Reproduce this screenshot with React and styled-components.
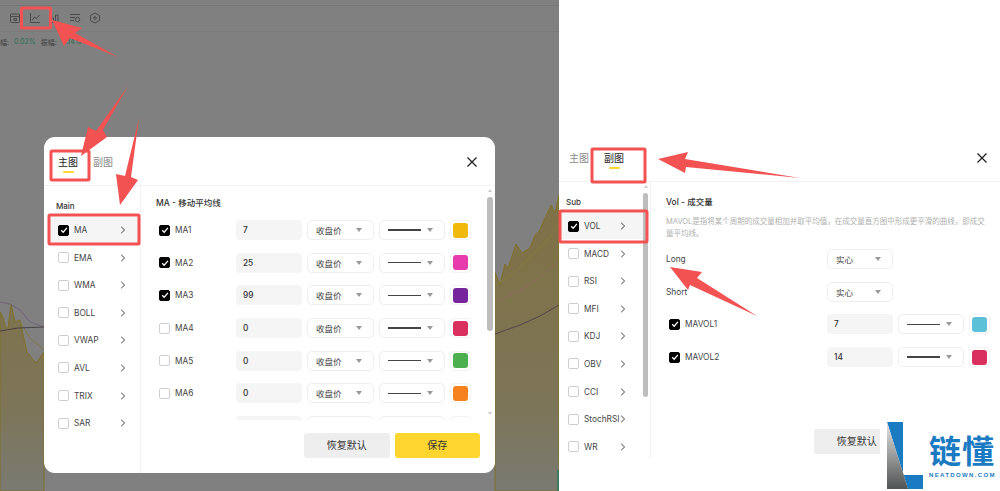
import React from 'react';
import styled, { createGlobalStyle } from 'styled-components';

const Colors = {
    RED: '#f25252',
    YELLOW: '#ffd530',
    BLUE: '#1b7bc2',
    TEXT: '#333333',
    BORDER: '#efefef',
};

const GlobalStyle = createGlobalStyle`
    html, body {
        margin: 0;
        padding: 0;
        background: #ffffff;
    }
    body {
        font-family: "Inter", "Noto Sans CJK SC", sans-serif;
        color: ${Colors.TEXT};
    }
    * {
        box-sizing: border-box;
    }
`;

const Page = styled.div`
    position: relative;
    display: flex;
    width: 1000px;
    height: 491px;
    overflow: hidden;
`;

const ChartSide = styled.div`
    position: relative;
    display: flex;
    flex-direction: column;
    width: 559px;
    height: 491px;
    background: #808080;
`;

const Toolbar = styled.div`
    display: flex;
    align-items: center;
    gap: 8px;
    height: 27px;
    margin-top: 5px;
    padding: 0 0 2px 9px;
    border-top: 1px solid #767676;
`;

const ToolIcon = styled.svg`
    width: 12px;
    height: 12px;
    fill: none;
    stroke: #454545;
    stroke-width: 0.9;
`;

const Stats = styled.div`
    display: flex;
    align-items: center;
    height: 20px;
    border-top: 1px solid #7a7a7a;
    margin-top: -1px;
    font-size: 7px;
    color: #404040;
`;

const StatValue = styled.span`
    color: #2c6e55;
    margin: 0 5px 0 5px;
`;

const ChartArea = styled.div`
    flex: 1;
    min-height: 0;
    & > svg {
        display: block;
        width: 100%;
        height: 100%;
    }
`;

const Modal = styled.div`
    position: absolute;
    left: 44px;
    top: 137px;
    display: flex;
    flex-direction: column;
    width: 451px;
    height: 336px;
    background: #ffffff;
    border-radius: 11px;
    overflow: hidden;
`;

const PlainPanel = styled.div`
    display: flex;
    flex-direction: column;
    width: 441px;
    height: 491px;
    padding-top: 133px;
    background: #ffffff;
`;

const Header = styled.div`
    display: flex;
    flex: none;
    height: 49px;
    padding: 18px ${({ $right }) => $right}px 0 ${({ $left }) => $left}px;
    border-bottom: 1px solid #f2f2f2;
`;

const Tab = styled.div`
    display: flex;
    flex-direction: column;
    align-items: center;
    margin-right: 15px;
    font-size: 10px;
    line-height: 14px;
    color: ${({ $active }) => ($active ? '#222222' : '#8a8a8a')};
    &::after {
        content: '';
        width: 11px;
        height: 2px;
        margin-top: 2px;
        border-radius: 1px;
        background: ${({ $active }) => ($active ? Colors.YELLOW : 'transparent')};
    }
`;

const CloseIcon = styled.svg`
    width: 12px;
    height: 12px;
    margin: 1px 0 0 auto;
    stroke: #1c1c1c;
    stroke-width: 1.2;
`;

const Body = styled.div`
    display: flex;
    flex: ${({ $height }) => ($height ? `0 0 ${$height}px` : 1)};
    min-height: 0;
`;

const Sidebar = styled.div`
    display: flex;
    flex: none;
    width: ${({ $width }) => $width}px;
    border-right: 1px solid #f2f2f2;
    overflow: hidden;
`;

const SideList = styled.div`
    width: ${({ $width }) => $width}px;
    margin-left: ${({ $inset }) => $inset}px;
`;

const SideTitle = styled.div`
    height: 31px;
    padding: 9px 0 0 ${({ $indent }) => $indent}px;
    font-size: 8px;
    line-height: 22px;
    font-weight: 500;
    color: #333333;
`;

const SideItem = styled.div`
    display: flex;
    align-items: center;
    gap: 5px;
    height: 26px;
    margin-bottom: 1.6px;
    padding: 0 ${({ $padRight }) => $padRight}px 0 ${({ $padLeft }) => $padLeft}px;
    background: ${({ $selected }) => ($selected ? '#f5f5f5' : 'transparent')};
    font-size: 8.3px;
    color: #444444;
`;

const SideLabel = styled.span`
    flex: 1;
    min-width: 0;
    white-space: nowrap;
`;

const Chevron = styled.svg`
    flex: none;
    width: 6px;
    height: 8px;
    fill: none;
    stroke: #444444;
    stroke-width: 1;
`;

const Box = styled.span`
    display: flex;
    flex: none;
    align-items: center;
    justify-content: center;
    width: 11px;
    height: 11px;
    border-radius: 2px;
    background: ${({ $checked }) => ($checked ? '#000000' : '#ffffff')};
    border: 1px solid ${({ $checked }) => ($checked ? '#000000' : '#cfcfcf')};
    & > svg {
        width: 8px;
        height: 8px;
        fill: none;
        stroke: #ffffff;
        stroke-width: 1.3;
    }
`;

const Track = styled.div`
    display: flex;
    flex: none;
    flex-direction: column;
    align-items: center;
    width: ${({ $width }) => $width}px;
    height: ${({ $height }) => $height}px;
    margin-right: 2px;
    padding-top: ${({ $top }) => $top}px;
`;

const TrackArrow = styled.span`
    width: 0;
    height: 0;
    border-left: 2.5px solid transparent;
    border-right: 2.5px solid transparent;
    border-bottom: ${({ $down }) => ($down ? 'none' : '3px solid #cccccc')};
    border-top: ${({ $down }) => ($down ? '3px solid #cccccc' : 'none')};
    margin-top: ${({ $down }) => ($down ? 'auto' : '0')};
`;

const Thumb = styled.span`
    width: 100%;
    height: ${({ $height }) => $height}px;
    margin-top: ${({ $gap }) => $gap}px;
    border-radius: 3px;
    background: #bdbdbd;
`;

const Content = styled.div`
    display: flex;
    flex: 1;
    flex-direction: column;
    min-width: 0;
`;

const ScrollRow = styled.div`
    display: flex;
    flex: none;
    height: 234px;
    overflow: hidden;
`;

const ScrollBody = styled.div`
    flex: 1;
    min-width: 0;
    padding: 11px 0 0 15px;
`;

const PlainBody = styled.div`
    flex: 1;
    padding: 14px 0 0 15px;
`;

const SectionTitle = styled.div`
    font-size: 8.5px;
    line-height: 12px;
    font-weight: 500;
    color: #333333;
`;

const Description = styled.div`
    width: 325px;
    margin: 8px 0 9px;
    font-size: 7.5px;
    line-height: 12px;
    color: #b0b0b0;
`;

const Rows = styled.div`
    display: flex;
    flex-direction: column;
    gap: 12.7px;
    margin-top: ${({ $top }) => $top}px;
`;

const SettingRow = styled.div`
    display: grid;
    grid-template-columns: ${({ $cols }) => $cols};
    column-gap: 5px;
    align-items: center;
    height: 20px;
    font-size: 8.3px;
    color: #444444;
`;

const CheckCell = styled.div`
    display: flex;
    align-items: center;
    gap: 5px;
    padding-left: 3px;
`;

const NumberInput = styled.div`
    height: 20px;
    padding-left: 7px;
    border-radius: 4px;
    background: #f5f5f5;
    font-size: 8.3px;
    font-weight: 500;
    line-height: 20px;
    color: #333333;
`;

const Select = styled.div`
    display: flex;
    align-items: center;
    justify-content: space-between;
    height: 20px;
    padding: 0 11px 0 8px;
    border: 1px solid ${Colors.BORDER};
    border-radius: 5px;
    background: #ffffff;
    font-size: 8.5px;
    color: #444444;
    &::after {
        content: '';
        margin-left: auto;
        border-left: 3px solid transparent;
        border-right: 3px solid transparent;
        border-top: 4px solid #999999;
    }
`;

const StrokeSample = styled.span`
    width: 33px;
    height: ${({ $weight }) => $weight}px;
    background: #444444;
`;

const Swatch = styled.div`
    display: flex;
    align-items: center;
    justify-content: center;
    width: 21px;
    height: 20px;
    border: 1px solid #f3f3f3;
    border-radius: 4px;
    &::after {
        content: '';
        width: 15px;
        height: 15px;
        border-radius: 3px;
        background: ${({ $color }) => $color};
    }
`;

const Footer = styled.div`
    display: flex;
    justify-content: flex-end;
    gap: 5px;
    padding: 13px 15px 0 0;
`;

const Button = styled.div`
    width: 85.5px;
    height: 25px;
    border-radius: 3px;
    background: ${({ $primary }) => ($primary ? Colors.YELLOW : '#eeeeee')};
    font-size: 10px;
    line-height: 25px;
    text-align: center;
    color: #333333;
`;

const ResetRow = styled.div`
    margin: 62px 0 0 148px;
`;

const Logo = styled.div`
    position: absolute;
    left: 880px;
    top: 420px;
    display: flex;
    width: 120px;
    height: 71px;
    padding: 2px 0 0 7px;
    background: #ffffff;
`;

const LogoMark = styled.svg`
    flex: none;
    width: 36px;
    height: 68px;
`;

const LogoText = styled.div`
    display: flex;
    flex-direction: column;
    margin-left: 6px;
    color: ${Colors.BLUE};
`;

const LogoName = styled.div`
    margin-top: 12px;
    font-size: 32px;
    line-height: 36px;
    font-weight: 700;
    letter-spacing: 1px;
    white-space: nowrap;
`;

const LogoSub = styled.div`
    margin-top: 1px;
    font-family: "Liberation Sans", sans-serif;
    font-size: 6px;
    line-height: 8px;
    font-weight: 700;
    letter-spacing: 1.35px;
    white-space: nowrap;
`;

const Annotations = styled.svg`
    position: absolute;
    inset: 0;
    width: 1000px;
    height: 491px;
    pointer-events: none;
`;

const MAIN_ITEMS = ['MA', 'EMA', 'WMA', 'BOLL', 'VWAP', 'AVL', 'TRIX', 'SAR'];
const SUB_ITEMS = ['VOL', 'MACD', 'RSI', 'MFI', 'KDJ', 'OBV', 'CCI', 'StochRSI', 'WR'];

const MA_ROWS = [
    { name: 'MA1', value: '7', checked: true, weight: 1.2, color: '#f0b90b' },
    { name: 'MA2', value: '25', checked: true, weight: 0.9, color: '#e93cac' },
    { name: 'MA3', value: '99', checked: true, weight: 1.2, color: '#76259c' },
    { name: 'MA4', value: '0', checked: false, weight: 1.2, color: '#d9305f' },
    { name: 'MA5', value: '0', checked: false, weight: 0.9, color: '#4caf50' },
    { name: 'MA6', value: '0', checked: false, weight: 1.2, color: '#f5821f' },
];

const VOL_ROWS = [
    { name: 'MAVOL1', value: '7', weight: 1.2, color: '#5cc1d8' },
    { name: 'MAVOL2', value: '14', weight: 1.4, color: '#d9305f' },
];

const MA_COLS = '75px 66px 67px 66px 21px';
const VOL_COLS = '156px 66px 66px 21px';

const Checkbox = ({ checked }) => (
    <Box $checked={checked}>
        {checked && (
            <svg viewBox="0 0 8 8">
                <path d="M1.2 4.2 3.2 6.2 6.9 1.8" />
            </svg>
        )}
    </Box>
);

const CloseButton = () => (
    <CloseIcon viewBox="0 0 12 12">
        <path d="M1.5 1.5 10.5 10.5M10.5 1.5 1.5 10.5" />
    </CloseIcon>
);

const SideEntry = ({ label, selected, padLeft, padRight }) => (
    <SideItem $selected={selected} $padLeft={padLeft} $padRight={padRight}>
        <Checkbox checked={selected} />
        <SideLabel>{label}</SideLabel>
        <Chevron viewBox="0 0 6 8">
            <path d="M1.2 0.8 4.6 4 1.2 7.2" />
        </Chevron>
    </SideItem>
);

const MaRow = ({ row }) => (
    <SettingRow $cols={MA_COLS}>
        <CheckCell>
            <Checkbox checked={row.checked} />
            {row.name}
        </CheckCell>
        <NumberInput>{row.value}</NumberInput>
        <Select>收盘价</Select>
        <Select><StrokeSample $weight={row.weight} /></Select>
        <Swatch $color={row.color} />
    </SettingRow>
);

// the next row is cut off by the scroll area, only the tops of its fields show
const CutOffRow = () => (
    <SettingRow $cols={MA_COLS}>
        <span />
        <NumberInput />
        <Select />
        <Select />
        <Swatch $color="transparent" />
    </SettingRow>
);

const ChartDrawing = () => (
    <svg viewBox="0 51 559 440" preserveAspectRatio="none">
        <defs>
            <linearGradient id="area" x1="0" y1="250" x2="0" y2="491" gradientUnits="userSpaceOnUse">
                <stop offset="0" stopColor="#7f7248" />
                <stop offset="0.65" stopColor="#7d7558" />
                <stop offset="1" stopColor="#7a7a72" />
            </linearGradient>
        </defs>
        <path fill="url(#area)" stroke="#807029" strokeWidth="1" d="M0 312 2 315 6 328 8 328 11 304 15 322 20 320 22 330 27 352 36 363 44 352V491H0Z" />
        <path fill="url(#area)" stroke="#807029" strokeWidth="1" d="M495 273 500 284 505 264 508 268 516 244 522 253 530 248 535 235 540 230 543 222 551 205 555 213 559 195V491H495Z" />
        <path fill="none" stroke="#7f7338" strokeWidth="0.8" d="M20 322 30 338 44 350" />
        <path fill="none" stroke="#6e5a78" strokeWidth="0.8" d="M0 302 10 304 20 310 30 322 44 327" />
        <path fill="none" stroke="#3a3440" strokeWidth="0.8" d="M0 331 18 328 44 327" />
        <path fill="none" stroke="#8a7a38" strokeWidth="0.8" d="M495 286 515 272 535 252 550 238 559 223" />
        <path fill="none" stroke="#8c6a5e" strokeWidth="0.8" d="M495 302 520 291 540 277 559 260" />
        <path fill="none" stroke="#45394a" strokeWidth="0.8" d="M495 334 520 325 540 316 559 305" />
        <rect x="557" y="470" width="2" height="21" fill="#3f7a5f" />
    </svg>
);

const App = () => (
    <>
        <GlobalStyle />
        <Page>
            <ChartSide>
                <Toolbar>
                    <ToolIcon viewBox="0 0 12 12">
                        <rect x="1.5" y="2" width="9" height="8.5" rx="1" />
                        <path d="M1.5 4.5h9M5 6.5h2.5v2H5z" />
                    </ToolIcon>
                    <ToolIcon viewBox="0 0 12 12">
                        <path d="M1.5 1v9.5H11M3 8.5 5.5 5 7.5 6.5 10.5 3" />
                    </ToolIcon>
                    <ToolIcon viewBox="0 0 12 12">
                        <path d="M2 10V6h2.5v4M6.5 10V3h2.5v7M1 10.5h10" />
                    </ToolIcon>
                    <ToolIcon viewBox="0 0 12 12">
                        <path d="M1 2.5h10M1 5.5h5M1 8.5h4" />
                        <circle cx="8.5" cy="7.5" r="2.2" />
                    </ToolIcon>
                    <ToolIcon viewBox="0 0 12 12">
                        <path d="M6 1 10.5 3.5V8.5L6 11 1.5 8.5V3.5Z" />
                        <circle cx="6" cy="6" r="1.3" />
                    </ToolIcon>
                </Toolbar>
                <Stats>
                    幅:
                    <StatValue>0.02%</StatValue>
                    振幅:
                    <StatValue>0.14%</StatValue>
                </Stats>
                <ChartArea>
                    <ChartDrawing />
                </ChartArea>

                <Modal>
                    <Header $left={14} $right={17}>
                        <Tab $active>主图</Tab>
                        <Tab>副图</Tab>
                        <CloseButton />
                    </Header>
                    <Body>
                        <Sidebar $width={97}>
                            <SideList $width={88} $inset={6}>
                                <SideTitle $indent={6}>Main</SideTitle>
                                {MAIN_ITEMS.map((item, i) => (
                                    <SideEntry key={item} label={item} selected={i === 0} padLeft={8} padRight={12} />
                                ))}
                            </SideList>
                        </Sidebar>
                        <Content>
                            <ScrollRow>
                                <ScrollBody>
                                    <SectionTitle>MA - 移动平均线</SectionTitle>
                                    <Rows $top={11}>
                                        {MA_ROWS.map(row => <MaRow key={row.name} row={row} />)}
                                        <CutOffRow />
                                    </Rows>
                                </ScrollBody>
                                <Track $width={6} $height={229} $top={3}>
                                    <TrackArrow />
                                    <Thumb $height={134} $gap={5} />
                                    <TrackArrow $down />
                                </Track>
                            </ScrollRow>
                            <Footer>
                                <Button>恢复默认</Button>
                                <Button $primary>保存</Button>
                            </Footer>
                        </Content>
                    </Body>
                </Modal>
            </ChartSide>

            <PlainPanel>
                <Header $left={10} $right={12}>
                    <Tab>主图</Tab>
                    <Tab $active>副图</Tab>
                    <CloseButton />
                </Header>
                <Body $height={276}>
                    <Sidebar $width={92}>
                        <SideList $width={84} $inset={0}>
                            <SideTitle $indent={7}>Sub</SideTitle>
                            {SUB_ITEMS.map((item, i) => (
                                <SideEntry key={item} label={item} selected={i === 0} padLeft={9} padRight={17} />
                            ))}
                        </SideList>
                        <Track $width={5} $height={216} $top={3}>
                            <TrackArrow />
                            <Thumb $height={204} $gap={5} />
                        </Track>
                    </Sidebar>
                    <PlainBody>
                        <SectionTitle>Vol - 成交量</SectionTitle>
                        <Description>
                            MAVOL是指将某个周期的成交量相加并取平均值，在成交量直方图中形成更平滑的曲线，即成交量平均线。
                        </Description>
                        <Rows $top={0}>
                            <SettingRow $cols={VOL_COLS}>
                                Long
                                <Select>实心</Select>
                            </SettingRow>
                            <SettingRow $cols={VOL_COLS}>
                                Short
                                <Select>实心</Select>
                            </SettingRow>
                            {VOL_ROWS.map(row => (
                                <SettingRow key={row.name} $cols={VOL_COLS}>
                                    <CheckCell>
                                        <Checkbox checked />
                                        {row.name}
                                    </CheckCell>
                                    <NumberInput>{row.value}</NumberInput>
                                    <Select><StrokeSample $weight={row.weight} /></Select>
                                    <Swatch $color={row.color} />
                                </SettingRow>
                            ))}
                        </Rows>
                        <ResetRow>
                            <Button>恢复默认</Button>
                        </ResetRow>
                    </PlainBody>
                </Body>
            </PlainPanel>

            <Logo>
                <LogoMark viewBox="0 0 36 68">
                    <defs>
                        <linearGradient id="logoGray" x1="0" y1="0" x2="0" y2="1">
                            <stop offset="0" stopColor="#e4e4e4" />
                            <stop offset="1" stopColor="#505353" />
                        </linearGradient>
                    </defs>
                    <path fill={Colors.BLUE} d="M0 0H16V53H36V67H21Z" />
                    <path fill="url(#logoGray)" d="M0 0 21 67H0Z" />
                </LogoMark>
                <LogoText>
                    <LogoName>链懂</LogoName>
                    <LogoSub>NEATDOWN.COM</LogoSub>
                </LogoText>
            </Logo>

            <Annotations viewBox="0 0 1000 491">
                <g fill="none" stroke={Colors.RED} strokeWidth="3">
                    <rect x="21.5" y="8" width="29" height="20" rx="1" />
                    <rect x="51" y="151" width="38" height="29" rx="1" />
                    <rect x="49" y="215" width="90" height="29" rx="1" />
                    <rect x="592" y="149" width="53" height="33" rx="1" />
                    <rect x="560" y="211" width="87" height="31" rx="1" />
                </g>
                <g fill={Colors.RED}>
                    <path d="M52 20 82 28 75 33 118 57 70 38 64 46Z" />
                    <path d="M128 86 103 130 107 137 81 156 88 127 96 131Z" />
                    <path d="M139 118 131 177 138 180 120 205 116 174 125 176Z" />
                    <path d="M658 159 688 152 685 159 800 178 686 167 685 173Z" />
                    <path d="M670 267 702 272 697 278 757 316 690 285 688 290Z" />
                </g>
            </Annotations>
        </Page>
    </>
);

export default App;
